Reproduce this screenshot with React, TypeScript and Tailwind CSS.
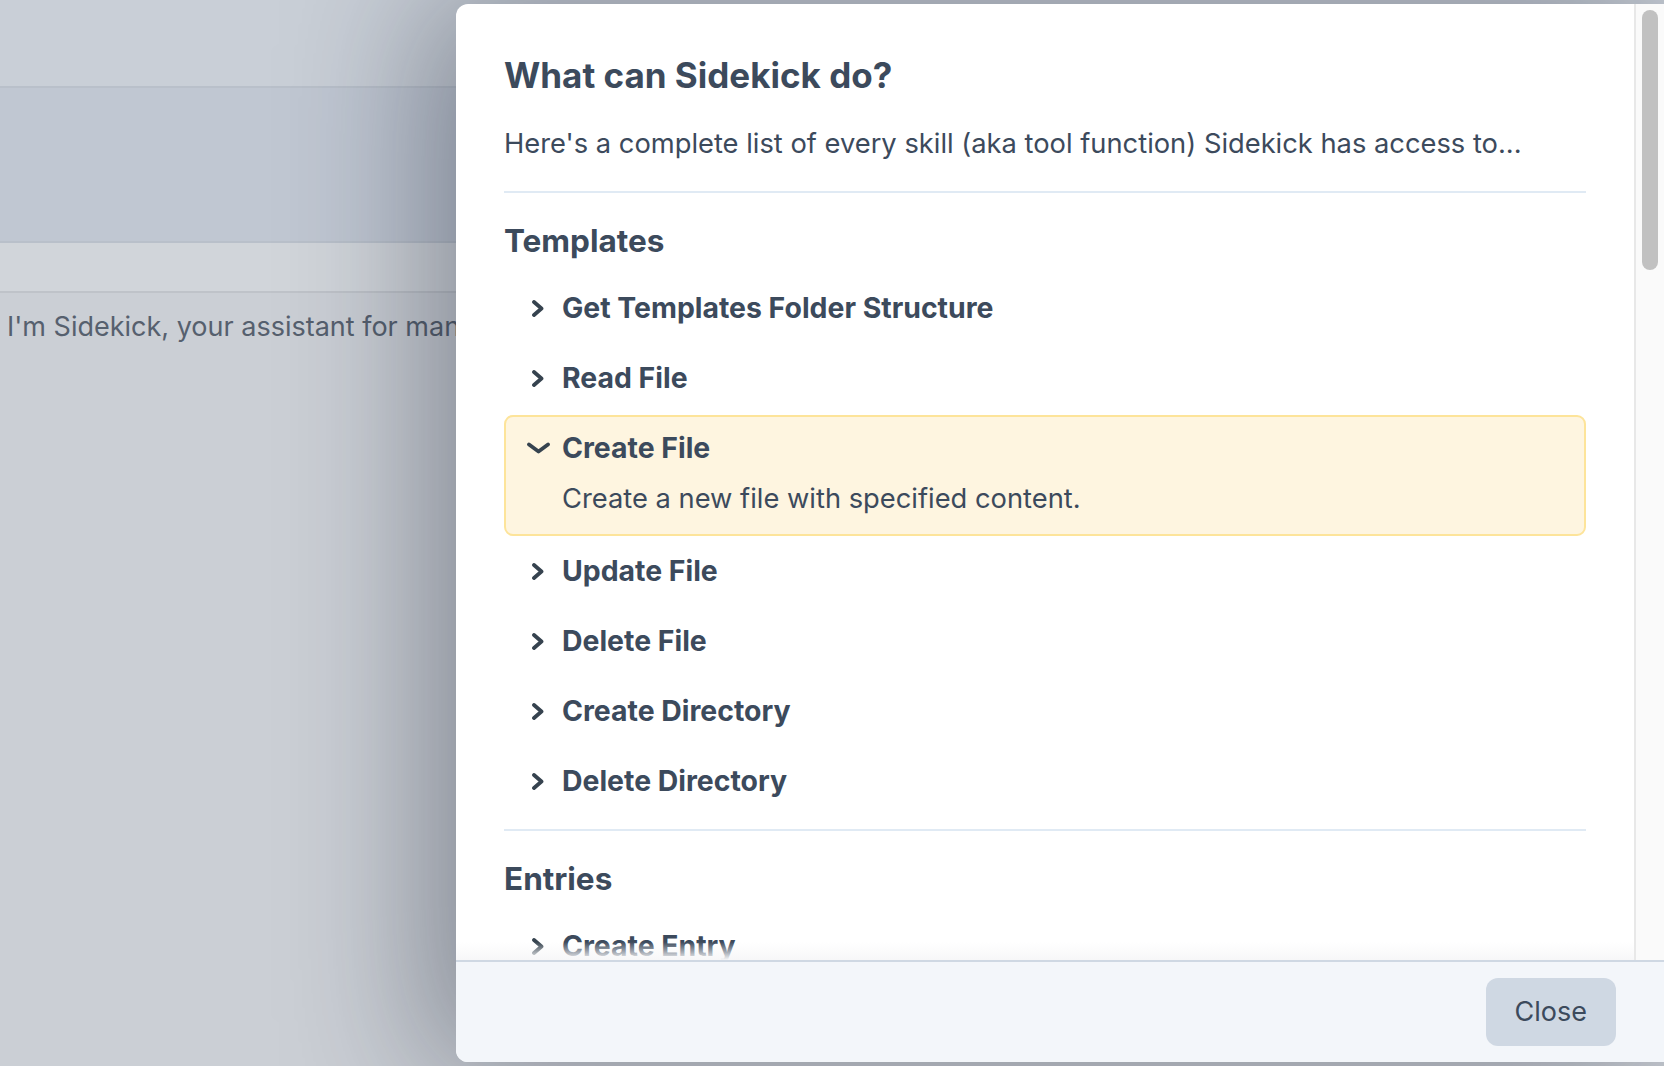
import React from "react";

const font = { fontFamily: "Inter, 'Noto Sans', 'Liberation Sans', sans-serif" };

function ChevronRight() {
  return (
    <svg width="14" height="17" viewBox="0 0 14 17" fill="none">
      <polyline points="3,2 10.5,8.5 3,15" stroke="#36434f" strokeWidth="3.8" strokeLinecap="round" strokeLinejoin="round" />
    </svg>
  );
}

function ChevronDown() {
  return (
    <svg width="25" height="12" viewBox="0 0 25 12" fill="none">
      <polyline points="3,2.5 12.5,9.5 22,2.5" stroke="#36434f" strokeWidth="3.8" strokeLinecap="round" strokeLinejoin="round" />
    </svg>
  );
}

type Item = { name: string; desc?: string; open?: boolean };

function SkillItem({ item }: { item: Item }) {
  return (
    <div
      className={
        item.open
          ? "-my-[1px] rounded-[9px] border-2 border-[#fde49a] bg-[#fef5e0] pb-[15px] pl-[19px] pr-4 pt-[13px]"
          : "rounded-[9px] border-2 border-transparent pb-[14px] pl-[19px] pr-4 pt-3"
      }
    >
      <div className="flex items-center">
        <div className="flex w-[26px] justify-center">
          {item.open ? <ChevronDown /> : <ChevronRight />}
        </div>
        <div className="ml-[11px] text-[28.4px] font-bold leading-[36px] text-[#3c4a5c]">{item.name}</div>
      </div>
      {item.open && item.desc ? (
        <div className="ml-[37px] mt-[15px] pb-[2px] text-[27.3px] leading-[36px] text-[#3c4a5c]">{item.desc}</div>
      ) : null}
    </div>
  );
}

function Section({ title, items }: { title: string; items: Item[] }) {
  return (
    <div className="border-t-2 border-[#e0eaf4] pb-[14px] pt-[29px]">
      <div className="text-[31.5px] font-bold leading-[38px] text-[#3c4a5c]">{title}</div>
      <div className="mt-4 flex flex-col gap-[4px]">
        {items.map((it) => (
          <SkillItem key={it.name} item={it} />
        ))}
      </div>
    </div>
  );
}

export default function App() {
  const templates: Item[] = [
    { name: "Get Templates Folder Structure" },
    { name: "Read File" },
    { name: "Create File", desc: "Create a new file with specified content.", open: true },
    { name: "Update File" },
    { name: "Delete File" },
    { name: "Create Directory" },
    { name: "Delete Directory" },
  ];
  const entries: Item[] = [
    { name: "Create Entry" },
    { name: "Read Entry" },
    { name: "Update Entry" },
    { name: "Delete Entry" },
  ];

  return (
    <div className="relative h-[1066px] w-[1664px] overflow-hidden bg-[#cbcfd5]" style={font}>
      {/* background app */}
      <div className="flex h-full flex-col">
        <div className="h-[88px] border-b-2 border-[#b9c0ca] bg-[#c9cfd7]" />
        <div className="h-[155px] border-b-2 border-[#b9c0ca] bg-[#c0c7d2]" />
        <div className="h-[50px] border-b-2 border-[#bfc3c9] bg-[#d1d5da]" />
        <div className="whitespace-nowrap pl-[7px] pt-[16px] text-[27px] leading-[36px] text-[#56606e]">
          I'm Sidekick, your assistant for managing your content and templates.
        </div>
      </div>

      {/* modal */}
      <div className="absolute bottom-[4px] left-[456px] right-0 top-[4px] flex flex-col overflow-hidden rounded-l-[12px] bg-white shadow-[-20px_0_140px_10px_rgba(15,23,42,0.38)]">
        <div className="relative flex min-h-0 flex-1">
          <div className="relative flex-1 overflow-hidden px-12 pt-[51px]">
            <div className="text-[35px] font-bold leading-[40px] text-[#3c4a5c]">What can Sidekick do?</div>
            <div className="mt-[31px] pb-[29px] text-[27.3px] leading-[36px] text-[#3c4a5c]">
              Here's a complete list of every skill (aka tool function) Sidekick has access to...
            </div>
            <Section title="Templates" items={templates} />
            <Section title="Entries" items={entries} />
            <div className="pointer-events-none absolute bottom-0 left-0 right-0 h-[18px] bg-gradient-to-b from-transparent to-[#f7f7f8]" />
          </div>
          <div className="flex w-[30px] justify-center border-l-2 border-[#e8e8e8] bg-[#fafafa] pt-[6px]">
            <div className="h-[260px] w-[16px] rounded-full bg-[#c1c1c1]" />
          </div>
        </div>
        <div className="flex h-[102px] items-center justify-end border-t-2 border-[#cfd8e3] bg-[#f3f6fa] px-12">
          <button className="h-[68px] rounded-[12px] bg-[#cfd8e3] px-[29px] text-[27px] leading-[36px] text-[#3c4a5c]">
            Close
          </button>
        </div>
      </div>
    </div>
  );
}
